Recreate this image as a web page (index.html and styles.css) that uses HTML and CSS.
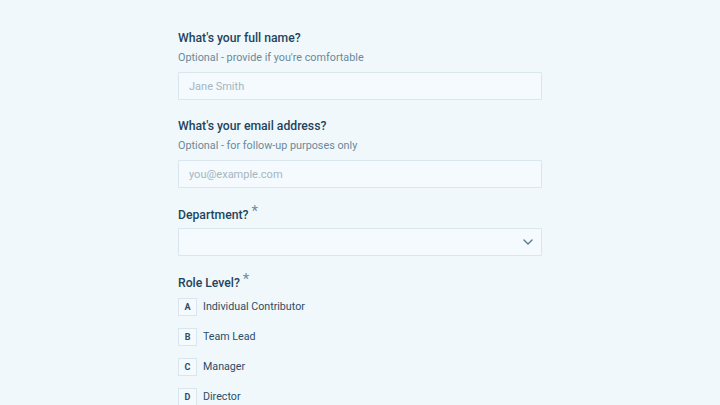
FILE: index.html
```html
<!DOCTYPE html>
<html lang="en">
<head>
    <meta charset="UTF-8">
    <meta name="viewport" content="width=device-width, initial-scale=1.0">
    <title>Team Survey</title>
    <link rel="stylesheet" href="styles.css">
</head>

<body>
<form class="survey-form">
    <div class="question">
        <label class="question-title" for="fullName">What's your full name?</label>
        <p class="question-hint">Optional - provide if you're comfortable</p>
        <input class="text-input" type="text" id="fullName" placeholder="Jane Smith">
    </div>

    <div class="question">
        <label class="question-title" for="email">What's your email address?</label>
        <p class="question-hint">Optional - for follow-up purposes only</p>
        <input class="text-input" type="email" id="email" placeholder="you@example.com">
    </div>

    <div class="question">
        <label class="question-title" for="department">Department? <span class="required">*</span></label>
        <div class="select-wrap">
            <select class="select-input" id="department">
                <option value=""></option>
            </select>
            <svg class="select-arrow" width="12" height="12" viewBox="0 0 12 12">
                <path d="M2 4 L6 8 L10 4" fill="none" stroke="#5b7a8e" stroke-width="1.4" stroke-linecap="round" stroke-linejoin="round"/>
            </svg>
        </div>
    </div>

    <div class="question">
        <div class="question-title">Role Level? <span class="required">*</span></div>
        <div class="choices">
            <label class="choice"><span class="choice-key">A</span>Individual Contributor</label>
            <label class="choice"><span class="choice-key">B</span>Team Lead</label>
            <label class="choice"><span class="choice-key">C</span>Manager</label>
            <label class="choice"><span class="choice-key">D</span>Director</label>
        </div>
    </div>
</form>
</body>
</html>
```

FILE: styles.css
```css
* {
    margin: 0;
    padding: 0;
    box-sizing: border-box;
    font-family: Roboto, 'Liberation Sans', sans-serif;
    font-stretch: 90%;
}

body {
    min-height: 100vh;
    background-color: #f1f8fc;
    display: flex;
    justify-content: center;
}

.survey-form {
    width: 364px;
    padding-top: 29px;
    display: flex;
    flex-direction: column;
    gap: 17px;
}

.question {
    display: flex;
    flex-direction: column;
}

.question-title {
    display: block;
    font-size: 12.2px;
    font-weight: 500;
    color: #1d4460;
    line-height: 18px;
    margin-bottom: 3px;
}

.required {
    color: #6f8d9e;
    font-weight: 400;
    font-size: 15px;
    position: relative;
    top: -3px;
}

.question-hint {
    font-size: 10.8px;
    color: #6a889a;
    line-height: 16px;
    margin-bottom: 6px;
}

.text-input,
.select-input {
    width: 100%;
    height: 28px;
    padding: 0 10px;
    border: 1px solid #d9e6ed;
    border-radius: 1px;
    background-color: #f4fafd;
    font-size: 11px;
    color: #1d4460;
    outline: none;
}

.text-input::placeholder {
    color: #a3b6c2;
}

.select-wrap {
    position: relative;
    margin-top: 1px;
}

.select-input {
    appearance: none;
}

.select-arrow {
    position: absolute;
    right: 8px;
    top: 8px;
}

.choices {
    display: flex;
    flex-direction: column;
    gap: 12px;
    margin-top: 3px;
}

.choice {
    display: flex;
    align-items: center;
    gap: 6px;
    font-size: 10.7px;
    line-height: 18px;
    color: #2b4d65;
    cursor: pointer;
}

.choice-key {
    width: 19px;
    height: 18px;
    border: 1px solid #d9e6ed;
    background-color: #f4fafd;
    display: flex;
    align-items: center;
    justify-content: center;
    font-size: 9px;
    font-weight: 700;
    color: #2b4d65;
}
```
